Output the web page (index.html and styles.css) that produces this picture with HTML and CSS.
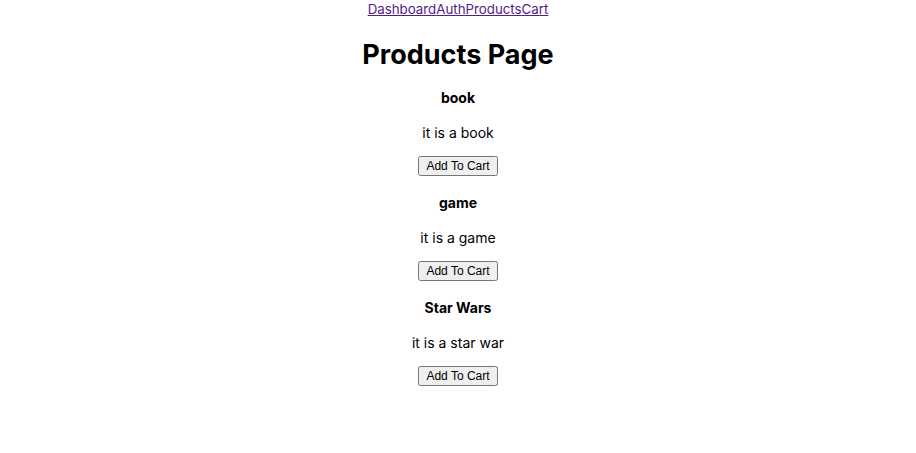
FILE: index.html
```html
<!DOCTYPE html>
<html lang="en">
<head>
    <meta charset="UTF-8">
    <meta name="viewport" content="width=device-width, initial-scale=1.0">
    <title>Products</title>
    <link rel="stylesheet" href="styles.css">
</head>
<body>
    <div class="App">
        <nav class="nav">
            <a href="#dashboard">Dashboard</a><a href="#auth">Auth</a><a href="#products">Products</a><a href="#cart">Cart</a>
        </nav>
        <h1>Products Page</h1>
        <div class="product">
            <h3>book</h3>
            <p>it is a book</p>
            <button>Add To Cart</button>
        </div>
        <div class="product">
            <h3>game</h3>
            <p>it is a game</p>
            <button>Add To Cart</button>
        </div>
        <div class="product">
            <h3>Star Wars</h3>
            <p>it is a star war</p>
            <button>Add To Cart</button>
        </div>
    </div>
</body>
</html>
```

FILE: styles.css
```css
body {
    margin: 0;
    font-family: Inter, "Noto Sans", sans-serif;
    color: #000;
    background: #fff;
}
.App {
    text-align: center;
}
.nav {
    font-size: 13.3px;
    line-height: 18px;
}
.nav a {
    color: #551a8b;
}
h1 {
    font-size: 27px;
    line-height: 33px;
    margin: 20px 0 18px;
}
.product h3 {
    font-size: 14px;
    margin: 0;
    line-height: 18px;
}
.product p {
    font-size: 14px;
    margin: 17px 0 12px;
    line-height: 18px;
}
.product button {
    font-family: "Liberation Sans", Arial, sans-serif;
    font-size: 12px;
    margin-bottom: 18px;
}
```
